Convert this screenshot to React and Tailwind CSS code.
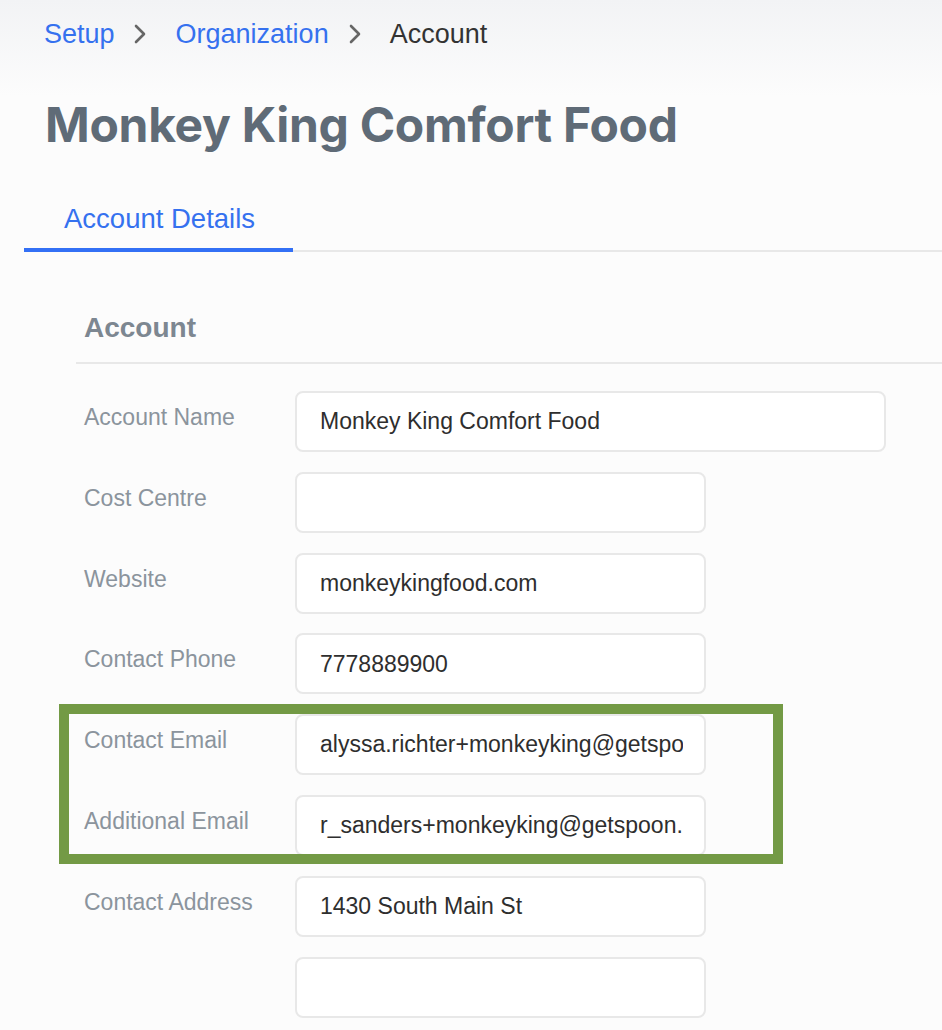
import React from 'react'

function Chevron() {
  return (
    <svg width="12" height="20" viewBox="0 0 12 20" className="shrink-0">
      <polyline points="2,2 10,10 2,18" fill="none" stroke="#666" strokeWidth="2.6" strokeLinecap="round" strokeLinejoin="round" />
    </svg>
  )
}

const fields = [
  { label: 'Account Name', value: 'Monkey King Comfort Food', wide: true },
  { label: 'Cost Centre', value: '' },
  { label: 'Website', value: 'monkeykingfood.com' },
  { label: 'Contact Phone', value: '7778889900' },
  { label: 'Contact Email', value: 'alyssa.richter+monkeyking@getspoon.com' },
  { label: 'Additional Email', value: 'r_sanders+monkeyking@getspoon.com' },
  { label: 'Contact Address', value: '1430 South Main St' },
  { label: '', value: '' },
]

function FieldRow({ label, value, wide }) {
  return (
    <div className="flex">
      <div className="w-[211px] shrink-0 pt-[12px] text-[23px] leading-[28px] text-[#8b949d]">{label}</div>
      <div className={`${wide ? 'w-[591px]' : 'w-[411px]'} h-[61px] shrink-0 bg-white border-2 border-[#e8e8e8] rounded-lg pl-[23px] pr-[21px] flex items-center`}>
        <div className="overflow-hidden whitespace-nowrap text-[23px] text-[#2e2e2e] w-full">{value}</div>
      </div>
    </div>
  )
}

export default function App() {
  return (
    <div className="relative min-h-screen bg-[#fcfcfc] overflow-hidden" style={{ fontFamily: '"Liberation Sans", Arial, sans-serif' }}>
      <div className="bg-gradient-to-b from-[#f2f3f5] to-[#fcfcfc] h-[96px] absolute inset-x-0 top-0"></div>

      <div className="relative">
        {/* breadcrumb */}
        <div className="flex items-center pt-[18px] pl-[44px] text-[27px] leading-[32px]">
          <span className="text-[#3571ef]">Setup</span>
          <span className="ml-[19px] mr-[30px] flex"><Chevron /></span>
          <span className="text-[#3571ef]">Organization</span>
          <span className="ml-[20px] mr-[29px] flex"><Chevron /></span>
          <span className="text-[#333]">Account</span>
        </div>

        {/* title */}
        <h1 className="mt-[46px] pl-[45px] text-[48px] leading-[58px] font-bold text-[#5f6b77] tracking-[-0.3px]" style={{ fontFamily: 'Inter, "Liberation Sans", sans-serif' }}>
          Monkey King Comfort Food
        </h1>

        {/* tabs */}
        <div className="mt-[49px] ml-[24px] flex border-b-2 border-[#e8e8e8]">
          <div className="w-[269px] pl-[40px] pb-[13px] text-[27.5px] leading-[32px] text-[#3571ef] border-b-4 border-[#3370f5] -mb-[2px]">
            Account Details
          </div>
        </div>

        {/* section */}
        <div className="ml-[76px] mt-[59px]">
          <div className="pl-[8px] pb-[17px] text-[28px] leading-[34px] font-bold text-[#7d8791] border-b-2 border-[#e8e8e8]">
            Account
          </div>
          <div className="pl-[8px] pt-[27px] flex flex-col gap-[19.8px]">
            {fields.map((f, i) => (
              <FieldRow key={i} {...f} />
            ))}
          </div>
        </div>
      </div>

      {/* annotation box */}
      <div className="absolute left-[59px] top-[704px] w-[724px] h-[160px] border-[10px] border-[#739a45]"></div>
    </div>
  )
}
